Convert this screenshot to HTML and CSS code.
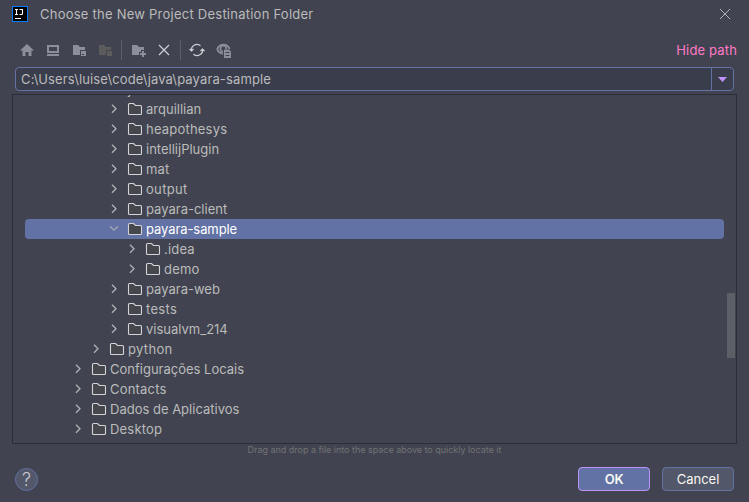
FILE: index.html
```
<!DOCTYPE html>
<html lang="en">
<head>
<meta charset="utf-8">
<title>Choose the New Project Destination Folder</title>
<link rel="stylesheet" href="styles.css">
</head>
<body>
<svg class="defs" width="0" height="0">
  <symbol id="folder" viewBox="0 0 16 16"><path d="M1.5 3.5q0-1 1-1h4l2 2h5q1 0 1 1v7q0 1-1 1h-11q-1 0-1-1z" fill="#45474d" stroke="#d2d4d8" stroke-width="1.1"/></symbol>
  <symbol id="right" viewBox="0 0 16 16"><path d="M6 3.700l4 4-4 4" fill="none" stroke="#b0b2b7" stroke-width="1.3"/></symbol>
  <symbol id="down" viewBox="0 0 16 16"><path d="M4 5.200l4 4 4-4" fill="none" stroke="#a4a8b6" stroke-width="1.3"/></symbol>
</svg>
<div class="dialog">
  <header class="titlebar">
    <svg class="logo" width="16" height="16" viewBox="0 0 16 16"><path d="M0 0h16v16H0z" fill="#087cfa"/><path d="M1 1h14v14H1z" fill="#000"/><path d="M3 3.500h3M4.500 3.500v5M3 8.500h3M7.500 3.500h3v4q0 1-1 1h-2" fill="none" stroke="#fff" stroke-width="1.1"/><path d="M3 12h6v1H3z" fill="#fff"/></svg>
    <h1 class="title">Choose the New Project Destination Folder</h1>
    <svg class="close" width="12" height="12" viewBox="0 0 12 12"><path d="M1 1l10 10M11 1L1 11" stroke="#b0b1b5"/></svg>
  </header>
  <div class="toolbar">
    <svg class="tool" viewBox="0 0 16 16"><path d="M8 2l7 6.500h-2.500V14H9.500v-4h-3v4h-3V8.500H1z" fill="#8c8f9a"/></svg>
    <svg class="tool" viewBox="0 0 16 16"><path d="M2 3h12v8H2zM4 5v4h8V5zM2 12h12v2H2z" fill="#8c8f9a" fill-rule="evenodd"/></svg>
    <svg class="tool" viewBox="0 0 16 16"><path d="M2 3h5l2 2h5v3H9v5H2zM10 9h5v5h-5zM11 12v1h2v-1z" fill="#8c8f9a" fill-rule="evenodd"/></svg>
    <svg class="tool" viewBox="0 0 16 16"><path d="M2 3h5l2 2h5v3H9v5H2zM10 9h5v5h-5z" fill="#5c5c5c"/></svg>
    <i class="separator"></i>
    <svg class="tool" viewBox="0 0 16 16"><path d="M2 3h5l2 2h5v3h-3v2H9v3H2zM12 9h2v2h2v2h-2v2h-2v-2h-2v-2h2z" fill="#8c8f9a"/></svg>
    <svg class="tool" viewBox="0 0 16 16"><path d="M3 3l10 10M13 3L3 13" stroke="#ced0d6" stroke-width="1.2"/></svg>
    <i class="separator"></i>
    <svg class="tool" viewBox="0 0 16 16"><g fill="none" stroke="#ced0d6" stroke-width="1.200"><path d="M2.500 9a5.500 5.500 0 0 1 9-5.200M13.500 7a5.500 5.500 0 0 1-9 5.200M.5 7l2 2 2-2M11.500 9l2-2 2 2"/></g></svg>
    <svg class="tool wide" viewBox="0 0 16 16"><path d="M7 11.500C4 11.500 2 9.500 1.300 7 2.500 4.200 4.700 2.700 7.500 2.700S12.500 4.200 13.700 7" fill="none" stroke="#8c8f9a" stroke-width="1.800"/><path d="M7 9.700A3 3 0 1 1 10.400 7" fill="none" stroke="#8c8f9a" stroke-width="1.600"/><path d="M8 7.500h5l2 2V16H8zM9.500 10v1h4v-1zM9.500 13v1h4v-1z" fill="#8c8f9a" fill-rule="evenodd"/></svg>
    <a class="hide-path">Hide path</a>
  </div>
  <div class="path-field"><span class="path">C:\Users\luise\code\java\payara-sample</span><span class="history"><svg width="9" height="5" viewBox="0 0 9 5"><path d="M0 0h9L4.500 5z" fill="#bd93f9"/></svg></span></div>
  <div class="tree">
    <ul class="rows">
      <li class="row d1"><svg><use href="#down"/></svg><svg><use href="#folder"/></svg><span>java</span></li>
      <li class="row d2 tight"><svg><use href="#right"/></svg><svg><use href="#folder"/></svg><span>arquillian</span></li>
      <li class="row d2"><svg><use href="#right"/></svg><svg><use href="#folder"/></svg><span>heapothesys</span></li>
      <li class="row d2 tight"><svg><use href="#right"/></svg><svg><use href="#folder"/></svg><span>intellijPlugin</span></li>
      <li class="row d2"><svg><use href="#right"/></svg><svg><use href="#folder"/></svg><span>mat</span></li>
      <li class="row d2 loose"><svg><use href="#right"/></svg><svg><use href="#folder"/></svg><span>output</span></li>
      <li class="row d2 tight"><svg><use href="#right"/></svg><svg><use href="#folder"/></svg><span>payara-client</span></li>
      <li class="row d2 tight selected"><svg><use href="#down"/></svg><svg><use href="#folder"/></svg><span>payara-sample</span></li>
      <li class="row d3"><svg><use href="#right"/></svg><svg><use href="#folder"/></svg><span>.idea</span></li>
      <li class="row d3"><svg><use href="#right"/></svg><svg><use href="#folder"/></svg><span>demo</span></li>
      <li class="row d2 tight"><svg><use href="#right"/></svg><svg><use href="#folder"/></svg><span>payara-web</span></li>
      <li class="row d2 loose"><svg><use href="#right"/></svg><svg><use href="#folder"/></svg><span>tests</span></li>
      <li class="row d2 tight"><svg><use href="#right"/></svg><svg><use href="#folder"/></svg><span>visualvm_214</span></li>
      <li class="row d1 loose"><svg><use href="#right"/></svg><svg><use href="#folder"/></svg><span>python</span></li>
      <li class="row d0 tight"><svg><use href="#right"/></svg><svg><use href="#folder"/></svg><span>Configurações Locais</span></li>
      <li class="row d0"><svg><use href="#right"/></svg><svg><use href="#folder"/></svg><span>Contacts</span></li>
      <li class="row d0 tight"><svg><use href="#right"/></svg><svg><use href="#folder"/></svg><span>Dados de Aplicativos</span></li>
      <li class="row d0"><svg><use href="#right"/></svg><svg><use href="#folder"/></svg><span>Desktop</span></li>
    </ul>
    <i class="scroll-thumb"></i>
  </div>
  <p class="hint">Drag and drop a file into the space above to quickly locate it</p>
  <footer class="actions">
    <button class="help">?</button>
    <button class="button primary">OK</button>
    <button class="button">Cancel</button>
  </footer>
</div>
</body>
</html>
```
FILE: styles.css
```
* { box-sizing: border-box; }
body { margin: 0; background: #414450; color: #bbbbbb; font: 13px/20px Inter, "Liberation Sans", sans-serif; letter-spacing: .2px; }
.defs { display: block; height: 0; }
.dialog { height: 502px; overflow: hidden; display: flex; flex-direction: column; }
.titlebar { height: 28px; flex: none; display: flex; align-items: center; padding: 0 18px 0 12px; }
.title { margin: 0 auto 0 12px; font-size: 13px; font-weight: 400; letter-spacing: .24px; }
.toolbar { height: 39px; flex: none; display: flex; align-items: center; gap: 10px; padding: 5px 12px 0 19px; }
.tool { width: 16px; height: 16px; flex: none; }
.wide { margin-left: 1px; }
.separator { width: 1px; height: 20px; margin: 0 -2px; background: #5c5f69; }
.hide-path { margin-left: auto; color: #ff79c6; letter-spacing: .15px; }
.path-field { height: 24px; flex: none; margin: 0 15px; display: flex; border: 1px solid #6272a4; border-radius: 4px; background: #3a3d4c; }
.path { flex: 1; padding-left: 5px; line-height: 22px; letter-spacing: .13px; }
.history { width: 22px; border-left: 1px solid #6272a4; display: flex; align-items: center; justify-content: center; }
.tree { height: 350px; flex: none; margin: 3px 12px 0; border: 1px solid #2b2d39; overflow: hidden; display: flex; }
.rows { flex: 1; list-style: none; margin: -16px 0 0 12px; padding: 0; }
.row { height: 20px; display: flex; align-items: center; border-radius: 4px; white-space: nowrap; }
.row svg { width: 16px; height: 16px; flex: none; margin-right: 5px; }
.row svg + svg { margin-right: 3px; }
.tight { letter-spacing: 0; }
.loose { letter-spacing: .33px; }
.d0 { padding-left: 45px; }
.d1 { padding-left: 63px; }
.d2 { padding-left: 81px; }
.d3 { padding-left: 99px; }
.selected { background: #6272a4; color: #fff; letter-spacing: -.08px; }
.scroll-thumb { width: 8px; height: 65px; margin: 198px 1px 0 3px; background: #5c5f66; }
.hint { margin: 0; height: 12px; font-size: 9px; line-height: 12px; text-align: center; color: #717274; letter-spacing: -.02px; }
.actions { display: flex; align-items: center; gap: 12px; margin: 11px 15px 0; }
.help { width: 23px; height: 23px; margin-right: auto; padding: 0; border: 1px solid #6272a4; border-radius: 50%; background: #525769; color: #c8cad0; font: 300 18px/21px Inter, sans-serif; }
.button { width: 72px; height: 24px; padding: 0; border: 1px solid #6272a4; border-radius: 4px; background: #525769; color: #f8f8f2; font: 13px/20px Inter, sans-serif; letter-spacing: 0; }
.primary { background: #6272a4; border-color: #bd93f9; font-weight: 600; letter-spacing: -.3px; }
```
